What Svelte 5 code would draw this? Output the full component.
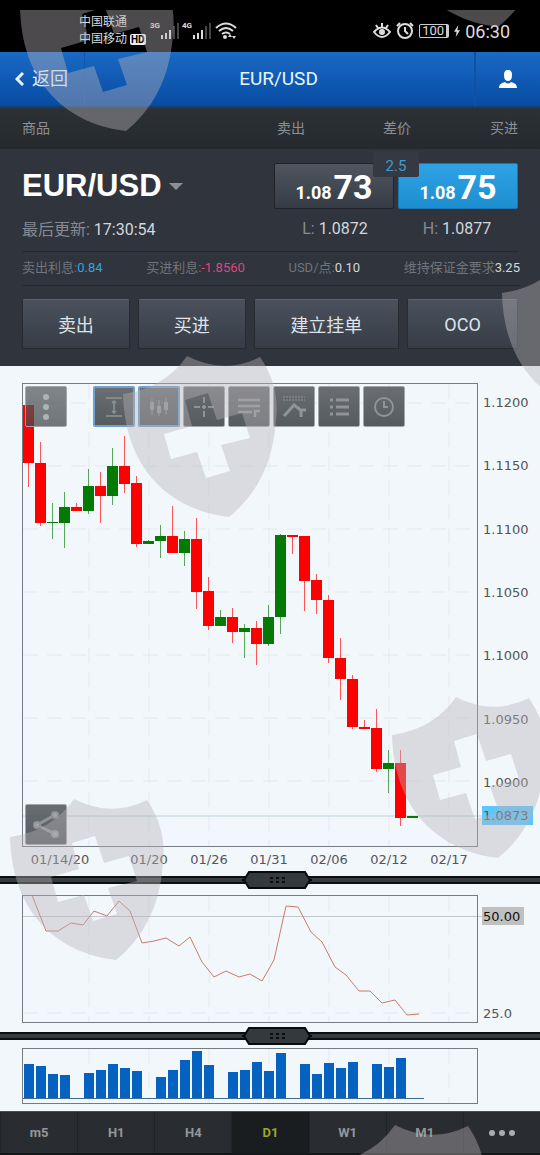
<script>
    const actions = ['卖出', '买进', '建立挂单', 'OCO'];
    const periods = ['m5', 'H1', 'H4', 'D1', 'W1', 'M1'];
    let period = 'D1';

    const tools = ['height', 'candles', 'crosshair', 'lines', 'trend', 'list', 'clock'];

    // up/down, body top, body bottom, high, low
    const candles = [
        ['down', 405, 463, 405, 487],
        ['down', 463, 523, 442, 526],
        ['up', 522, 523, 503, 539],
        ['up', 507, 523, 492, 548],
        ['down', 507, 511, 503, 511],
        ['up', 486, 511, 469, 514],
        ['down', 486, 496, 472, 523],
        ['up', 466, 496, 448, 505],
        ['down', 466, 484, 436, 493],
        ['down', 483, 544, 476, 547],
        ['up', 541, 544, 540, 544],
        ['up', 536, 541, 525, 558],
        ['down', 536, 553, 506, 553],
        ['up', 539, 553, 531, 566],
        ['down', 539, 592, 518, 609],
        ['down', 591, 626, 577, 630],
        ['up', 617, 626, 610, 626],
        ['down', 617, 632, 608, 643],
        ['up', 628, 632, 624, 658],
        ['down', 628, 644, 621, 665],
        ['up', 617, 644, 605, 646],
        ['up', 535, 617, 534, 634],
        ['down', 535, 537, 535, 554],
        ['down', 536, 581, 536, 611],
        ['down', 580, 600, 574, 614],
        ['down', 600, 658, 595, 663],
        ['down', 658, 679, 638, 700],
        ['down', 679, 727, 675, 729],
        ['down', 727, 729, 720, 729],
        ['down', 728, 769, 709, 772],
        ['up', 763, 769, 750, 793],
        ['down', 763, 818, 750, 826],
        ['up', 816, 818, 816, 818]
    ];

    const prices = ['1.1200', '1.1150', '1.1100', '1.1050', '1.1000', '1.0950', '1.0900'];
    const gridX = [89, 149, 209, 269, 329, 389, 449];
    const dates = [
        [60, '01/14/20'],
        [149, '01/20'],
        [209, '01/26'],
        [269, '01/31'],
        [329, '02/06'],
        [389, '02/12'],
        [449, '02/17']
    ];

    const rsi = '32,895 46,931 58,931 71,923 83,925 94,911 107,916 119,901 130,911 142,943 154,941 166,938 179,946 190,937 202,962 214,977 226,971 239,977 250,974 262,981 274,960 286,906 298,907 311,932 322,942 335,967 346,975 359,991 370,991 382,1003 395,1000 407,1015 419,1014';

    const volumes = [
        35, 33, 25, 24, 0, 26, 29, 35, 31, 28, 0, 22, 29, 39, 48, 34, 0,
        27, 29, 37, 28, 46, 0, 35, 25, 36, 31, 37, 0, 35, 32, 41
    ];

    const shields = [[-103, -386], [269, -490], [0, 0], [379, -101], [269, 341], [-113, 443], [208, 769]];
</script>

{#snippet divider()}
    <div class="divider">
        <svg class="handle" width="72" height="18" viewBox="0 0 72 18" aria-hidden="true">
            <path d="M1 9h2l5-8h56l5 8h2-2l-5 8H8L3 9z" fill="#34393e" stroke="#080a0b" stroke-width="2" />
            <path d="M29 7h3m3 0h3m3 0h3M29 11h3m3 0h3m3 0h3" stroke="#0a0c0d" stroke-width="2" />
        </svg>
    </div>
{/snippet}

<div class="app">
    <div class="status">
        <div class="carriers">
            <div>中国联通</div>
            <div>中国移动 <b class="hd">HD</b></div>
        </div>
        {#each ['3G', '4G'] as net}
            <div class="signal">
                <span>{net}</span>
                <svg width="19" height="18" viewBox="0 0 19 18" aria-hidden="true">
                    <path d="M2 13v4M6 11v6M10 8v9" stroke="#ddd" stroke-width="2" />
                    <path d="M14 4v13M18 1v16" stroke="#444" stroke-width="2" />
                </svg>
            </div>
        {/each}
        <svg class="wifi" width="22" height="18" viewBox="0 0 22 18" aria-hidden="true">
            <path d="M1 6Q11-3 21 6M4 9q7-6 14 0M7 12q4-3 8 0" fill="none" stroke="#ddd" stroke-width="2" />
            <circle cx="10" cy="15" r="2" fill="#ddd" />
            <path d="m13 15 2-3 2 3zm4-1 2 3 2-3z" fill="#ddd" />
        </svg>
        <div class="system">
            <svg width="18" height="18" viewBox="0 0 18 18" fill="none" stroke="#ddd" stroke-width="2" aria-hidden="true">
                <path d="M1 10q8-9 16 0-8 10-16 0zM9 1v4M3 3l2 3M15 3l-2 3" />
                <circle cx="9" cy="10" r="2" fill="#ddd" />
            </svg>
            <svg width="18" height="18" viewBox="0 0 18 18" fill="none" stroke="#ddd" stroke-width="2" aria-hidden="true">
                <circle cx="9" cy="9" r="7" />
                <path d="M9 5v4l3 3M1 4l3-3M14 1l3 3" />
            </svg>
            <span class="battery">100</span>
            <svg width="6" height="16" viewBox="0 0 7 16" aria-hidden="true">
                <path d="M5 1 0 9h3l-1 6 5-8H4z" fill="#ddd" />
            </svg>
            <time>06:30</time>
        </div>
    </div>

    <header class="nav">
        <button class="back">
            <svg width="9" height="14" viewBox="0 0 9 14" aria-hidden="true">
                <path d="M8 1 2 7l6 6" fill="none" stroke="#e5f6ff" stroke-width="3" />
            </svg>
            返回
        </button>
        <h1>EUR/USD</h1>
        <button class="user" aria-label="账户">
            <svg width="20" height="20" viewBox="0 0 20 20" fill="#fff" aria-hidden="true">
                <path d="M10 1c3 0 4 2 4 5s-1 6-4 6-4-3-4-6 1-5 4-5z" />
                <path d="M1 19c0-4 3-5 6-6 2 2 4 2 6 0 3 1 6 2 6 6z" />
            </svg>
        </button>
    </header>

    <div class="columns">
        <span>商品</span>
        <span>卖出</span>
        <span>差价</span>
        <span>买进</span>
    </div>

    <section class="quote">
        <div class="top">
            <button class="symbol">EUR/USD<i></i></button>
            <div class="prices">
                <button class="price"><small>1.08</small>73</button>
                <button class="price buy"><small>1.08</small>75</button>
                <span class="spread">2.5</span>
            </div>
        </div>
        <div class="top info">
            <div class="updated">最后更新: <b>17:30:54</b></div>
            <div class="range">
                <span>L: <b>1.0872</b></span>
                <span>H: <b>1.0877</b></span>
            </div>
        </div>
        <div class="details">
            <span>卖出利息:<b class="pos">0.84</b></span>
            <span>买进利息:<b class="neg">-1.8560</b></span>
            <span>USD/点:<b>0.10</b></span>
            <span>维持保证金要求<b>3.25</b></span>
        </div>
        <div class="actions">
            {#each actions as action}
                <button>{action}</button>
            {/each}
        </div>
    </section>

    <main>
        <div class="chart">
            <svg viewBox="0 366 540 509" role="img" aria-label="EUR/USD D1">
                <g class="grid">
                    {#each prices as price, i}
                        <line x1="23" x2="477" y1={403 + i * 63} y2={403 + i * 63} />
                    {/each}
                    {#each gridX as x}
                        <line x1={x} x2={x} y1="384" y2="846" />
                    {/each}
                </g>
                <line x1="23" x2="484" y1="816" y2="816" stroke="#bcd3d8" />
                {#each candles as [dir, top, bottom, high, low], i}
                    <g class={dir}>
                        <line x1={28.5 + i * 12} x2={28.5 + i * 12} y1={high} y2={low} />
                        <rect x={23 + i * 12} y={top} width="11" height={bottom - top} />
                    </g>
                {/each}
                <rect class="frame" x="22.5" y="383.5" width="455" height="463" />
                <rect x="482" y="806" width="51" height="19" fill="#5fc5fa" />
                <g class="axis">
                    {#each prices as price, i}
                        <text x="483" y={407 + i * 63.3}>{price}</text>
                    {/each}
                    <text x="483" y="820">1.0873</text>
                    {#each dates as [x, date]}
                        <text {x} y="864" text-anchor="middle">{date}</text>
                    {/each}
                </g>
            </svg>

            <div class="toolbar">
                <button class="tool more" aria-label="菜单">
                    <svg viewBox="0 0 30 30" aria-hidden="true">
                        <g fill="#aeb2b5" stroke="none">
                            <circle cx="15" cy="5" r="3" />
                            <circle cx="15" cy="15" r="3" />
                            <circle cx="15" cy="25" r="3" />
                        </g>
                    </svg>
                </button>
                {#each tools as tool, i}
                    <button class="tool" class:active={i < 2} aria-label={tool}>
                        <svg viewBox="0 0 30 30" aria-hidden="true">
                            {#if tool === 'height'}
                                <path d="M7 6h16M7 24h16M15 9v12M13 11l2-2 2 2M13 19l2 2 2-2" stroke-width="1.5" />
                            {:else if tool === 'candles'}
                                <path d="M8 7v16M15 8v16M22 6v16" stroke-width="1" />
                                <path d="M8 10v8M15 14v7M22 10v8" stroke-width="4" />
                            {:else if tool === 'crosshair'}
                                <path d="M15 5v6M15 19v6M5 15h6M19 15h6M13 15h4M15 13v4" />
                            {:else if tool === 'lines'}
                                <path d="M4 8h22M4 14h22M4 20h14M21 25v-6h5" stroke-width="2.5" />
                            {:else if tool === 'trend'}
                                <path d="M4 5h22" stroke-dasharray="2 1" stroke-width="1" />
                                <path d="M4 8h22" stroke-dasharray="2 1" stroke-width="1" />
                                <path d="m5 24 10-11 8 6M22 25v-7h5" stroke-width="3" />
                            {:else if tool === 'list'}
                                <path d="M6 8h3M6 15h3M6 22h3M12 8h13M12 15h13M12 22h13" stroke-width="3" />
                            {:else}
                                <circle cx="15" cy="15" r="9" />
                                <path d="M15 9v6h4" />
                            {/if}
                        </svg>
                    </button>
                {/each}
            </div>

            <button class="tool share" aria-label="分享">
                <svg viewBox="0 0 30 30" aria-hidden="true">
                    <path d="M24 5 6 15l18 9" stroke-width="3" />
                    <g fill="#a3a7aa">
                        <circle cx="24" cy="5" r="3" />
                        <circle cx="6" cy="15" r="3" />
                        <circle cx="24" cy="24" r="3" />
                    </g>
                </svg>
            </button>
        </div>

        {@render divider()}

        <svg viewBox="0 885 540 146" role="img" aria-label="RSI">
            <g class="grid">
                {#each gridX as x}
                    <line x1={x} x2={x} y1="896" y2="1022" />
                {/each}
                <line x1="23" x2="477" y1="1013" y2="1013" />
            </g>
            <line x1="23" x2="484" y1="916.5" y2="916.5" stroke="#c3c8ca" />
            <polyline points={rsi} fill="none" stroke="#c97c6c" />
            <rect class="frame" x="22.5" y="895.5" width="455" height="127" />
            <rect x="482" y="907" width="42" height="18" fill="#c0c0c0" />
            <g class="axis">
                <text class="level" x="483" y="921">50.00</text>
                <text x="483" y="1018">25.0</text>
            </g>
        </svg>

        {@render divider()}

        <svg viewBox="0 1041 540 70" role="img" aria-label="成交量">
            <g class="grid">
                {#each gridX as x}
                    <line x1={x} x2={x} y1="1049" y2="1103" />
                {/each}
            </g>
            {#each volumes as volume, i}
                <rect x={24 + i * 12} y={1099 - volume} width="10" height={volume} fill="#0562c1" />
            {/each}
            <line x1="23" x2="424" y1="1098.5" y2="1098.5" stroke="#3f6a91" />
            <rect class="frame" x="22.5" y="1048.5" width="455" height="55" />
        </svg>
    </main>

    <nav class="periods">
        {#each periods as p}
            <button class:selected={p === period} on:click={() => (period = p)}>{p}</button>
        {/each}
        <button aria-label="更多">
            <svg width="28" height="8" viewBox="0 0 28 8" fill="#a9adb0" aria-hidden="true">
                <circle cx="4" cy="4" r="3" />
                <circle cx="14" cy="4" r="3" />
                <circle cx="24" cy="4" r="3" />
            </svg>
        </button>
    </nav>

    <svg class="watermark" viewBox="0 10 540 1145" aria-hidden="true">
        {#each shields as [x, y]}
            <path
                transform="translate({x} {y})"
                fill-rule="evenodd"
                d="M123 394Q165 388 187 356 224 375 260 357 280 386 276 420C273 465 255 496 229 517 176 511 125 475 123 394zM185 400l23-7 9 27 25-7 8 25-29 7 9 26-24 7-9-26-26 7-7-25 28-8z"
            />
        {/each}
    </svg>
</div>

<style>
    :global(body) {
        margin: 0;
        background: #f2f7fb;
    }
    .app {
        position: relative;
        overflow: hidden;
        font-family: Roboto, "Noto Sans CJK SC", sans-serif;
    }
    .app :global(*) {
        box-sizing: border-box;
    }
    button {
        margin: 0;
        padding: 0;
        border: 0;
        background: none;
        color: inherit;
        font: inherit;
        cursor: pointer;
    }
    b {
        font-weight: 400;
        color: #d3d7dc;
    }

    .status {
        display: flex;
        align-items: center;
        height: 52px;
        padding: 10px 30px 0 79px;
        background: #000;
        color: #ddd;
    }
    .carriers {
        width: 71px;
        font-size: 12px;
        line-height: 17px;
        white-space: nowrap;
    }
    .hd {
        display: inline-block;
        padding: 0 1px;
        border-radius: 2px;
        background: #eee;
        color: #000;
        font-size: 10px;
        font-weight: 700;
        line-height: 11px;
    }
    .signal {
        display: flex;
        width: 32px;
    }
    .signal span {
        width: 10px;
        font-size: 8px;
        line-height: 8px;
        font-weight: 700;
    }
    .wifi {
        margin-left: 1px;
    }
    .system {
        display: flex;
        flex: 1;
        align-items: center;
        justify-content: flex-end;
        gap: 5px;
    }
    .battery {
        padding: 0 2px;
        border: 1px solid #ccc;
        border-right-width: 3px;
        border-radius: 2px;
        font-size: 13px;
        line-height: 12px;
    }
    .system time {
        font-size: 18px;
    }

    .nav {
        display: grid;
        grid-template-columns: 85px 1fr 66px;
        align-items: stretch;
        height: 56px;
        border-bottom: 2px solid #123d79;
        background: linear-gradient(#1a69c5, #074ca3);
        color: #e5f6ff;
    }
    .nav h1 {
        margin: 0;
        padding-right: 17px;
        padding-left: 15px;
        font-size: 19px;
        font-weight: 400;
        line-height: 54px;
        text-align: center;
    }
    .back {
        display: flex;
        align-items: center;
        gap: 8px;
        padding-left: 15px;
        border-right: 1px solid #1355a8;
        font-size: 18px;
        line-height: 24px;
    }
    .user {
        display: flex;
        align-items: center;
        justify-content: center;
        border-left: 2px solid #1051a2;
    }

    .columns {
        display: grid;
        grid-template-columns: 1fr 106px 106px 107px;
        height: 40px;
        padding: 0 22px;
        background: linear-gradient(#2c3135, #262a2e);
        color: #8b9094;
        font-size: 14px;
        line-height: 40px;
        text-align: right;
    }
    .columns span:first-child {
        text-align: left;
    }

    .quote {
        padding: 14px 22px 17px;
        border-top: 1px solid #25282c;
        background: #30343c;
        color: #858b93;
    }
    .top {
        display: flex;
        align-items: center;
        justify-content: space-between;
    }
    .symbol {
        display: flex;
        align-items: center;
        gap: 7px;
        color: #fff;
        font-family: "Liberation Sans", sans-serif;
        font-size: 31px;
        font-weight: 700;
    }
    .symbol i {
        border: 7px solid transparent;
        border-top-color: #8b9097;
        border-bottom: 0;
    }
    .prices {
        position: relative;
        display: grid;
        grid-template-columns: 1fr 1fr;
        gap: 4px;
        width: 244px;
    }
    .price {
        display: flex;
        align-items: baseline;
        justify-content: center;
        gap: 2px;
        height: 46px;
        border: 1px solid #20242a;
        border-radius: 2px;
        background: linear-gradient(#50565f, #363c46);
        color: #fff;
        font-size: 34px;
        font-weight: 700;
        line-height: 46px;
    }
    .price small {
        font-size: 18px;
    }
    .buy {
        border-color: #1c77b0;
        background: linear-gradient(#2da2e4, #1d8fd1);
    }
    .spread {
        position: absolute;
        top: -12px;
        left: 99px;
        width: 46px;
        height: 26px;
        border-radius: 2px;
        background: #353a42;
        color: #4299ce;
        font-size: 15px;
        line-height: 30px;
        text-align: center;
    }
    .info {
        height: 43px;
        padding-bottom: 4px;
        border-bottom: 1px solid #25292f;
        font-size: 16px;
    }
    .range {
        display: grid;
        grid-template-columns: 1fr 1fr;
        width: 244px;
        text-align: center;
    }
    .details {
        display: flex;
        justify-content: space-between;
        height: 34px;
        margin-right: -2px;
        border-bottom: 1px solid #25292f;
        color: #6f757d;
        font-size: 13px;
        line-height: 31px;
        white-space: nowrap;
    }
    .details .pos {
        color: #36a3df;
    }
    .details .neg {
        color: #df477b;
    }
    .actions {
        display: grid;
        grid-template-columns: 108fr 108fr 146fr 111fr;
        gap: 8px;
        padding-top: 13px;
    }
    .actions button {
        height: 50px;
        border: 1px solid #262b31;
        border-top-color: #59616c;
        border-radius: 2px;
        background: linear-gradient(#4a515c, #363d47);
        color: #dfe3e8;
        font-size: 18px;
    }

    main {
        background: #f2f7fb;
    }
    main svg {
        display: block;
        width: 100%;
    }
    .grid {
        stroke: #e3e9ec;
        stroke-dasharray: 15 9;
    }
    .frame {
        fill: none;
        stroke: #757b80;
    }
    .up {
        fill: #047a04;
        stroke: #047a04;
    }
    .down {
        fill: #fd0000;
        stroke: #fd0000;
    }
    .up line,
    .down line {
        stroke-opacity: 0.65;
    }
    .up rect,
    .down rect {
        stroke: none;
    }
    .axis {
        fill: #555;
        font-family: "DejaVu Sans", sans-serif;
        font-size: 13px;
    }
    .axis .level {
        fill: #111;
    }

    .chart {
        position: relative;
    }
    .toolbar {
        position: absolute;
        top: 20px;
        left: 25px;
        display: flex;
        gap: 3px;
    }
    .tool {
        display: flex;
        align-items: center;
        justify-content: center;
        width: 42px;
        height: 41px;
        border: 1px solid #a3a7ab;
        border-radius: 2px;
        background: linear-gradient(rgba(91, 95, 99, 0.9), rgba(69, 74, 78, 0.9));
    }
    .tool svg {
        width: 30px;
        height: 30px;
        fill: none;
        stroke: #909497;
        stroke-width: 2;
    }
    .more {
        margin-right: 23px;
        background: linear-gradient(rgba(91, 95, 99, 0.75), rgba(69, 74, 78, 0.75));
    }
    .active {
        border: 2px solid #6fa0ce;
    }
    .share {
        position: absolute;
        bottom: 30px;
        left: 25px;
    }

    .divider {
        display: flex;
        align-items: center;
        justify-content: center;
        height: 10px;
        padding-left: 14px;
        border: 1px solid #f2f7fb;
        border-width: 1px 0;
        background: linear-gradient(#0c0e10 2px, #373c41 2px, #34393d 6px, #0c0e10 6px);
    }
    main .handle {
        z-index: 1;
        flex: none;
        width: 72px;
    }

    .periods {
        display: grid;
        grid-template-columns: repeat(7, 1fr);
        height: 44px;
        border-top: 1px solid #4a4e51;
        border-bottom: 2px solid #15181a;
        background: #292d31;
        color: #93979a;
        font-size: 13px;
        font-weight: 700;
    }
    .periods button {
        border-left: 1px solid #1f2326;
    }
    .periods .selected {
        background: #191d20;
        color: #9aa72b;
    }

    .watermark {
        position: absolute;
        right: 0;
        bottom: 0;
        width: 100%;
        fill: rgba(184, 180, 184, 0.41);
        pointer-events: none;
    }
</style>
